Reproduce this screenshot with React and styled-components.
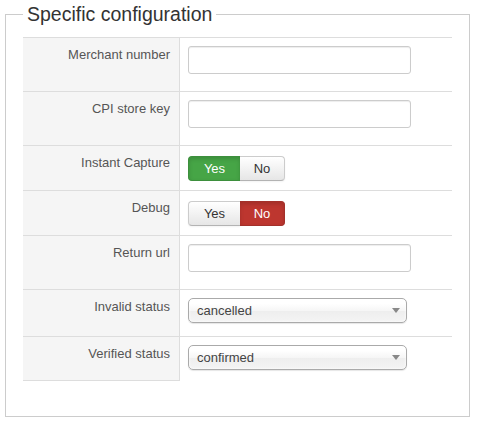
import React from 'react'
import styled, { createGlobalStyle, css } from 'styled-components'

const Global = createGlobalStyle`
    html, body {
        margin: 0;
        background: #fff;
    }
    body {
        font-family: "Liberation Sans", Arial, sans-serif;
        font-size: 13px;
        line-height: 18px;
        color: #333;
    }
`;

const Fieldset = styled.fieldset`
    margin: 0 7px 0 5px;
    padding: 9px 17px 35px;
    border: 1px solid #ccc;
    min-width: 0;
`;

const Legend = styled.legend`
    padding: 0 4px;
    font-size: 19.5px;
    line-height: 28px;
    color: #333;
`;

const Table = styled.div`
    display: flex;
    flex-direction: column;
`;

const Row = styled.div`
    display: grid;
    grid-template-columns: 157px 1fr;
    border-top: 1px solid #ddd;
`;

const Label = styled.div`
    background: #f5f5f5;
    border-right: 1px solid #ddd;
    padding: 8px 9px 8px 8px;
    text-align: right;
    color: #555;
    ${p => p.$last && css`border-bottom: 1px solid #ddd;`}
`;

const Cell = styled.div`
    padding: 8px 8px ${p => p.$bottom || 8}px;
    display: flex;
    align-items: flex-start;
`;

const TextInput = styled.input`
    box-sizing: border-box;
    width: 223px;
    height: 28px;
    margin: 0 0 9px;
    padding: 4px 6px;
    border: 1px solid #ccc;
    border-radius: 3px;
    box-shadow: inset 0 1px 1px rgba(0, 0, 0, 0.075);
    font: inherit;
    color: #555;
    outline: none;
`;

const Group = styled.div`
    display: flex;
    margin: 2px 0 1px;
`;

const activeColors = {
    yes: { bg: '#46a546', border: '#3d8f3d' },
    no: { bg: '#bd362f', border: '#a3302a' },
};

const Toggle = styled.button`
    box-sizing: border-box;
    height: 25px;
    width: ${p => p.$w}px;
    padding: 0;
    font-family: inherit;
    font-size: 13px;
    line-height: 23px;
    cursor: pointer;
    border: 1px solid #ccc;
    border-bottom-color: #b3b3b3;
    color: #333;
    background: linear-gradient(#fff, #e6e6e6);
    box-shadow: inset 0 1px 0 rgba(255, 255, 255, 0.2), 0 1px 2px rgba(0, 0, 0, 0.05);
    border-radius: ${p => (p.$first ? '4px 0 0 4px' : '0 4px 4px 0')};
    ${p => p.$first ? css`border-right: none;` : css`border-left: none;`}
    ${p => p.$active && css`
        background: ${activeColors[p.$kind].bg};
        border-color: ${activeColors[p.$kind].border};
        color: #fff;
        box-shadow: inset 0 2px 4px rgba(0, 0, 0, 0.15);
    `}
`;

const Select = styled.div`
    box-sizing: border-box;
    width: 219px;
    height: 25px;
    margin: ${p => p.$mb ? `0 0 ${p.$mb}px` : 0};
    padding: 0 6px 0 8px;
    display: flex;
    align-items: center;
    justify-content: space-between;
    border: 1px solid #aaa;
    border-radius: 5px;
    background: linear-gradient(#fff 20%, #f6f6f6 50%, #eee 52%, #f4f4f4 100%);
    box-shadow: inset 0 0 3px #fff, 0 1px 1px rgba(0, 0, 0, 0.1);
    color: #444;
    font-size: 13px;
    cursor: pointer;
`;

const Arrow = styled.span`
    width: 0;
    height: 0;
    border-left: 4px solid transparent;
    border-right: 4px solid transparent;
    border-top: 5px solid #888;
`;

const YesNo = ({ value }) => (
    <Group>
        <Toggle $first $w={52} $kind="yes" $active={value === 'yes'}>Yes</Toggle>
        <Toggle $w={45} $kind="no" $active={value === 'no'}>No</Toggle>
    </Group>
)

const App = () => (
    <>
        <Global />
        <Fieldset>
            <Legend>Specific configuration</Legend>
            <Table>
                <Row>
                    <Label>Merchant number</Label>
                    <Cell><TextInput type="text" /></Cell>
                </Row>
                <Row>
                    <Label>CPI store key</Label>
                    <Cell><TextInput type="text" /></Cell>
                </Row>
                <Row>
                    <Label>Instant Capture</Label>
                    <Cell><YesNo value="yes" /></Cell>
                </Row>
                <Row>
                    <Label>Debug</Label>
                    <Cell><YesNo value="no" /></Cell>
                </Row>
                <Row>
                    <Label>Return url</Label>
                    <Cell><TextInput type="text" /></Cell>
                </Row>
                <Row>
                    <Label>Invalid status</Label>
                    <Cell><Select $mb={5}>cancelled<Arrow /></Select></Cell>
                </Row>
                <Row>
                    <Label $last>Verified status</Label>
                    <Cell $bottom={11}><Select>confirmed<Arrow /></Select></Cell>
                </Row>
            </Table>
        </Fieldset>
    </>
)

export default App
